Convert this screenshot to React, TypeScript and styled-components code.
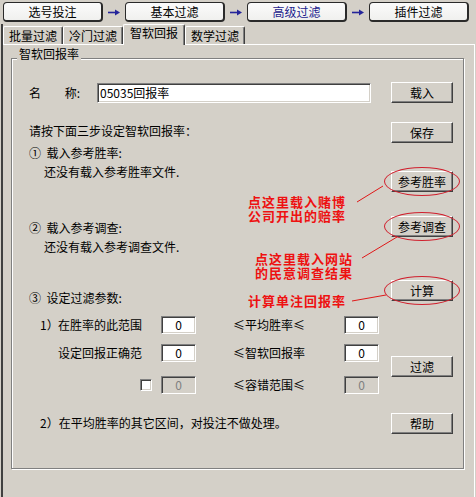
import React from "react";
import styled, { createGlobalStyle } from "styled-components";

const GlobalStyle = createGlobalStyle`
  html, body { margin: 0; padding: 0; background: #d4d0c8; }
  body {
    font-family: "Noto Sans CJK SC", "Noto Sans", sans-serif;
    font-size: 12px;
    color: #000;
  }
  * { box-sizing: border-box; }
`;

const Window = styled.div`
  position: relative;
  width: 476px;
  height: 497px;
  overflow: hidden;
  background: #d4d0c8;
  display: flex;
  flex-direction: column;
`;

/* ---------- step bar ---------- */
const StepBar = styled.div`
  display: flex;
  align-items: flex-start;
  height: 24px;
  padding: 2px 0 0 3px;
`;

const StepButton = styled.div<{ $current?: boolean }>`
  width: 100px;
  height: 20px;
  border: 1px solid #2a2a2a;
  border-right-width: 2px;
  border-bottom-width: 2px;
  border-radius: 4px;
  background: linear-gradient(#fbfbfb, #f0f0ee);
  display: flex;
  align-items: center;
  justify-content: center;
  font-size: 12px;
  line-height: 16px;
  color: ${(p) => (p.$current ? "#1c1c8e" : "#000")};
`;

const StepArrow = styled.div`
  width: 22px;
  height: 20px;
  display: flex;
  align-items: center;
  justify-content: center;
`;

const ArrowIcon = () => (
  <svg width="12" height="7" viewBox="0 0 12 7">
    <line x1="0" y1="3.5" x2="8" y2="3.5" stroke="#24249a" strokeWidth="1.6" />
    <polygon points="7,0.5 12,3.5 7,6.5" fill="#24249a" />
  </svg>
);

/* ---------- tabs ---------- */
const Body = styled.div`
  flex: 1;
  display: flex;
  flex-direction: column;
  margin-left: 1px;
  border-left: 2px solid #404040;
`;

const TabRow = styled.div`
  position: relative;
  z-index: 1;
  display: flex;
  align-items: flex-end;
  height: 20px;
`;

const Tab = styled.div<{ $active?: boolean }>`
  width: ${(p) => (p.$active ? 62 : 60)}px;
  height: ${(p) => (p.$active ? 21 : 18)}px;
  margin-bottom: ${(p) => (p.$active ? -1 : 0)}px;
  border-top: 1px solid #ffffff;
  border-left: 1px solid #ffffff;
  border-right: 1px solid #404040;
  box-shadow: inset -1px 0 0 #808080;
  border-radius: 2px 2px 0 0;
  background: #d4d0c8;
  text-align: center;
  font-size: 12px;
  line-height: ${(p) => (p.$active ? 16 : 17)}px;
`;

const Panel = styled.div`
  flex: 1;
  margin-right: 1px;
  border-top: 1px solid #ffffff;
  border-right: 1px solid #ffffff;
  padding: 13px 0 0 8px;
`;

/* ---------- group box ---------- */
const GroupBox = styled.div`
  position: relative;
  width: 453px;
  height: 411px;
  border: 1px solid #808080;
  box-shadow: inset 1px 1px 0 #ffffff, 1px 1px 0 #ffffff;
  display: flex;
  padding: 0 10px 0 17px;
`;

const Legend = styled.div`
  position: absolute;
  left: 5px;
  top: -12px;
  padding: 0 2px;
  background: #d4d0c8;
  line-height: 14px;
`;

const LeftCol = styled.div`
  flex: 1;
  display: flex;
  flex-direction: column;
`;

const RightCol = styled.div`
  width: 62px;
  display: flex;
  flex-direction: column;
`;

const NameRow = styled.div`
  display: flex;
  align-items: center;
  height: 20px;
  margin-top: 24px;
`;

const NameLabel = styled.div`
  width: 51px;
  display: flex;
  justify-content: space-between;
  line-height: 16px;
`;

const NameInput = styled.div`
  width: 274px;
  height: 20px;
  margin-left: 17px;
  border: 1px solid;
  border-color: #808080 #ffffff #ffffff #808080;
  box-shadow: inset 1px 1px 0 #404040, inset -1px -1px 0 #d4d0c8;
  background: #ffffff;
  padding-left: 2px;
  line-height: 17px;
`;

const TextLine = styled.div<{ $mt: number; $indent?: number }>`
  margin-top: ${(p) => p.$mt}px;
  padding-left: ${(p) => p.$indent ?? 0}px;
  line-height: 16px;
  white-space: nowrap;
`;

const ParamRow = styled.div<{ $mt: number }>`
  display: grid;
  grid-template-columns: 18px 103px 35px 148px 35px;
  align-items: center;
  height: 18px;
  margin: ${(p) => p.$mt}px 0 0 11px;
  line-height: 16px;
  white-space: nowrap;
`;

const Prefix = styled.div``;

const ParamLabel = styled.div``;

const CheckCell = styled.div`
  display: flex;
  justify-content: flex-end;
  padding-right: 9px;
`;

const MidLabel = styled.div`
  padding-left: 37px;
`;

const Field = styled.div<{ $disabled?: boolean }>`
  width: 35px;
  height: 18px;
  border: 1px solid;
  border-color: #808080 #ffffff #ffffff #808080;
  box-shadow: inset 1px 1px 0 #404040, inset -1px -1px 0 #d4d0c8;
  background: ${(p) => (p.$disabled ? "#d4d0c8" : "#ffffff")};
  color: ${(p) => (p.$disabled ? "#808080" : "#000000")};
  text-align: center;
  line-height: 15px;
`;

const CheckBox = styled.div`
  width: 12px;
  height: 12px;
  border: 1px solid;
  border-color: #808080 #ffffff #ffffff #808080;
  box-shadow: inset 1px 1px 0 #404040, inset -1px -1px 0 #d4d0c8;
  background: #ffffff;
`;

const Button = styled.button<{ $mt: number; $mark?: boolean }>`
  position: relative;
  width: 62px;
  height: 21px;
  margin-top: ${(p) => p.$mt}px;
  padding: 0;
  border: 1px solid;
  border-color: #ffffff #404040 #404040 #ffffff;
  box-shadow: inset -1px -1px 0 #808080;
  background: #d4d0c8;
  font-family: "Noto Sans CJK SC", "Noto Sans", sans-serif;
  font-size: 12px;
  line-height: 16px;
  color: #000;
  &::after {
    content: "";
    display: ${(p) => (p.$mark ? "block" : "none")};
    position: absolute;
    left: -8px;
    right: -8px;
    top: -5px;
    bottom: -5px;
    border: 1px solid #d0202e;
    border-radius: 50%;
  }
`;

/* ---------- annotations ---------- */
const CalloutLines = styled.svg`
  position: absolute;
  left: 0;
  top: 0;
  pointer-events: none;
`;

const Callout = styled.div<{ $left: number; $top: number }>`
  position: absolute;
  left: ${(p) => p.$left}px;
  top: ${(p) => p.$top}px;
  display: flex;
  flex-direction: column;
  font-size: 13px;
  letter-spacing: 1px;
  font-weight: 700;
  color: #ee1111;
  white-space: nowrap;
`;

const CalloutLine = styled.div`
  height: 14px;
  line-height: 14px;
  overflow: visible;
`;

export default function App() {
  return (
    <>
      <GlobalStyle />
      <Window>
        <StepBar>
          <StepButton>选号投注</StepButton>
          <StepArrow><ArrowIcon /></StepArrow>
          <StepButton>基本过滤</StepButton>
          <StepArrow><ArrowIcon /></StepArrow>
          <StepButton $current>高级过滤</StepButton>
          <StepArrow><ArrowIcon /></StepArrow>
          <StepButton>插件过滤</StepButton>
        </StepBar>
        <Body>
          <TabRow>
            <Tab>批量过滤</Tab>
            <Tab>冷门过滤</Tab>
            <Tab $active>智软回报</Tab>
            <Tab>数学过滤</Tab>
          </TabRow>
          <Panel>
            <GroupBox>
              <Legend>智软回报率</Legend>
              <LeftCol>
                <NameRow>
                  <NameLabel>
                    <span>名</span>
                    <span>称:</span>
                  </NameLabel>
                  <NameInput>05035回报率</NameInput>
                </NameRow>
                <TextLine $mt={20}>请按下面三步设定智软回报率：</TextLine>
                <TextLine $mt={6}>①{"\u00a0\u00a0"}载入参考胜率:</TextLine>
                <TextLine $mt={3} $indent={15}>还没有载入参考胜率文件.</TextLine>
                <TextLine $mt={40}>②{"\u00a0\u00a0"}载入参考调查:</TextLine>
                <TextLine $mt={3} $indent={15}>还没有载入参考调查文件.</TextLine>
                <TextLine $mt={35}>③{"\u00a0\u00a0"}设定过滤参数:</TextLine>
                <ParamRow $mt={10}>
                  <Prefix>1）</Prefix>
                  <ParamLabel>在胜率的此范围</ParamLabel>
                  <Field>0</Field>
                  <MidLabel>≤平均胜率≤</MidLabel>
                  <Field>0</Field>
                </ParamRow>
                <ParamRow $mt={10}>
                  <Prefix />
                  <ParamLabel>设定回报正确范</ParamLabel>
                  <Field>0</Field>
                  <MidLabel>≤智软回报率</MidLabel>
                  <Field>0</Field>
                </ParamRow>
                <ParamRow $mt={14}>
                  <Prefix />
                  <CheckCell>
                    <CheckBox />
                  </CheckCell>
                  <Field $disabled>0</Field>
                  <MidLabel>≤容错范围≤</MidLabel>
                  <Field $disabled>0</Field>
                </ParamRow>
                <TextLine $mt={21} $indent={11}>2）在平均胜率的其它区间，对投注不做处理。</TextLine>
              </LeftCol>
              <RightCol>
                <Button $mt={23}>载入</Button>
                <Button $mt={19}>保存</Button>
                <Button $mt={28} $mark>参考胜率</Button>
                <Button $mt={24} $mark>参考调查</Button>
                <Button $mt={43} $mark>计算</Button>
                <Button $mt={55}>过滤</Button>
                <Button $mt={36}>帮助</Button>
              </RightCol>
            </GroupBox>
          </Panel>
        </Body>
        <CalloutLines width="476" height="497" viewBox="0 0 476 497">
          <line x1="357" y1="202" x2="383" y2="186" stroke="#e01818" strokeWidth="1" />
          <line x1="362" y1="258" x2="397" y2="237" stroke="#e01818" strokeWidth="1" />
          <line x1="352" y1="301" x2="386" y2="295" stroke="#e01818" strokeWidth="1" />
        </CalloutLines>
        <Callout $left={248} $top={195}>
          <CalloutLine>点这里载入赌博</CalloutLine>
          <CalloutLine>公司开出的赔率</CalloutLine>
        </Callout>
        <Callout $left={255} $top={252}>
          <CalloutLine>点这里载入网站</CalloutLine>
          <CalloutLine>的民意调查结果</CalloutLine>
        </Callout>
        <Callout $left={248} $top={294}>
          <CalloutLine>计算单注回报率</CalloutLine>
        </Callout>
      </Window>
    </>
  );
}
